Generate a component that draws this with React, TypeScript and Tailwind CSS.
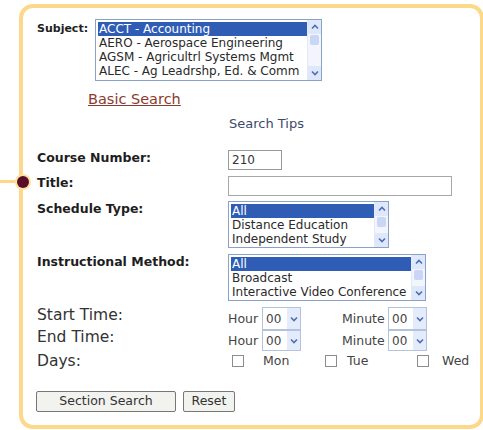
import React from "react";

const subjects = [
  "ACCT - Accounting",
  "AERO - Aerospace Engineering",
  "AGSM - Agricultrl Systems Mgmt",
  "ALEC - Ag Leadrshp, Ed. & Comm",
];

const Chevron = ({ up = false }: { up?: boolean }) => (
  <svg width="8" height="6" viewBox="0 0 8 6" className={up ? "rotate-180" : ""}>
    <path d="M1 1.5 L4 4.5 L7 1.5" fill="none" stroke="#4d6fb5" strokeWidth="1.6" />
  </svg>
);

const ScrollBar = () => (
  <div className="w-[14px] flex flex-col justify-between bg-[#f2f5fc] border-l border-[#e3e9f6]">
    <div className="flex flex-col">
      <div className="h-[14px] bg-[#dfe7fa] flex items-center justify-center">
        <Chevron up />
      </div>
      <div className="h-[10px] mx-[2px] mt-[1px] bg-[#c9d6f5] rounded-[2px]" />
    </div>
    <div className="h-[14px] bg-[#dfe7fa] flex items-center justify-center">
      <Chevron />
    </div>
  </div>
);

const ListBox = ({ items, width, height }: { items: string[]; width: number; height: number }) => (
  <div
    className="flex border border-[#8aa2c8] bg-white text-[12px] text-[#2a2a2a] leading-[14px]"
    style={{ width, height }}
  >
    <div className="flex-1 pt-[2px] pl-[2px] overflow-hidden whitespace-nowrap">
      {items.map((it, i) => (
        <div key={it} className={i === 0 ? "bg-[#2f5db6] text-white pl-[1px] h-[14px]" : "pl-[1px] h-[14px]"}>
          {it}
        </div>
      ))}
    </div>
    <ScrollBar />
  </div>
);

const TimeSelect = ({ h }: { h: number }) => (
  <div
    className="flex items-center w-[39px] border border-[#b3c2dd] bg-white text-[12px] text-[#444]"
    style={{ height: h }}
  >
    <span className="flex-1 pl-[3px]">00</span>
    <div className="w-[13px] h-full bg-[#e4ebfa] flex items-center justify-center">
      <Chevron />
    </div>
  </div>
);

const Box = () => <span className="inline-block w-[12px] h-[12px] border border-[#8c8c8c] bg-white" />;

const Label = ({ children }: { children: React.ReactNode }) => (
  <div className="w-[191px] shrink-0 font-bold text-[12.5px] leading-[15px] text-[#1e1e1e]">{children}</div>
);

const TimeRow = ({ label, h, shift }: { label: string; h: number; shift: string }) => (
  <div className="flex items-start text-[15.5px] leading-[18px] text-[#333]">
    <div className={"w-[191px] shrink-0 " + shift}>{label}</div>
    <div className="flex items-center text-[12.5px] text-[#444]">
      <span className="w-[34px]">Hour</span>
      <TimeSelect h={h} />
      <span className="ml-[41px] w-[46px]">Minute</span>
      <TimeSelect h={h} />
    </div>
  </div>
);

export default function App() {
  return (
    <div className="w-[483px] h-[430px] bg-white overflow-hidden pl-[19px] pt-[4px] font-['DejaVu_Sans',Verdana,sans-serif]">
      <div className="relative w-[465px] h-[425px] border-4 border-[#fcd98a] rounded-[14px] pl-[14px] pt-[11px]">
        {/* connector line and marker on the left edge */}
        <div className="absolute left-[-23px] top-[172px] w-[18px] h-[3px] bg-[#fcd98a]" />
        <div className="absolute left-[-8px] top-[166px] w-[16px] h-[16px] rounded-full bg-[#fde2a0] flex items-center justify-center">
          <div className="w-[12px] h-[12px] rounded-full bg-[#5a0d27]" />
        </div>

        <div className="flex items-start">
          <div className="w-[58px] shrink-0 font-bold text-[11px] text-[#222] mt-[2px]">Subject:</div>
          <ListBox items={subjects} width={227} height={62} />
        </div>

        <div className="ml-[51px] mt-[10px] text-[14.5px] leading-[17px] text-[#8a3b2f] underline">Basic Search</div>
        <div className="ml-[192px] mt-[8px] text-[13px] leading-[16px] text-[#3d4a6a]">Search Tips</div>

        <div className="flex items-start mt-[18px]">
          <Label>
            <div>Course Number:</div>
          </Label>
          <div className="w-[54px] h-[20px] border border-[#9a9a9a] bg-white text-[12px] text-[#333] pl-[3px] leading-[18px]">
            210
          </div>
        </div>

        <div className="flex items-start mt-[6px]">
          <Label>
            <div className="-mt-[1px]">Title:</div>
          </Label>
          <div className="w-[224px] h-[20px] border border-[#a8a8a8] bg-white" />
        </div>

        <div className="flex items-start mt-[5px]">
          <Label>
            <div>Schedule Type:</div>
          </Label>
          <ListBox items={["All", "Distance Education", "Independent Study"]} width={161} height={47} />
        </div>

        <div className="flex items-start mt-[6px]">
          <Label>Instructional Method:</Label>
          <ListBox items={["All", "Broadcast", "Interactive Video Conference"]} width={198} height={47} />
        </div>

        <div className="mt-[6px]">
          <TimeRow label="Start Time:" h={23} shift="-mt-[1px]" />
          <TimeRow label="End Time:" h={21} shift="-mt-[2px]" />
        </div>

        <div className="flex items-center h-[16px] mt-[2px] text-[15.5px] leading-[18px] text-[#333]">
          <div className="w-[195px] shrink-0">Days:</div>
          <div className="flex items-center text-[12.5px] text-[#444]">
            <Box />
            <span className="ml-[19px] w-[35px]">Mon</span>
            <span className="ml-[27px] flex"><Box /></span>
            <span className="ml-[10px] w-[55px]">Tue</span>
            <span className="ml-[15px] flex"><Box /></span>
            <span className="ml-[13px]">Wed</span>
          </div>
        </div>

        <div className="flex items-center gap-[7px] mt-[22px] -ml-[1px]">
          <button className="w-[140px] h-[21px] border border-[#777] rounded-[2px] bg-[#f2f2ef] text-[12.5px] text-[#333]">
            Section Search
          </button>
          <button className="w-[52px] h-[21px] border border-[#777] rounded-[2px] bg-[#f2f2ef] text-[12.5px] text-[#333]">
            Reset
          </button>
        </div>
      </div>
    </div>
  );
}
